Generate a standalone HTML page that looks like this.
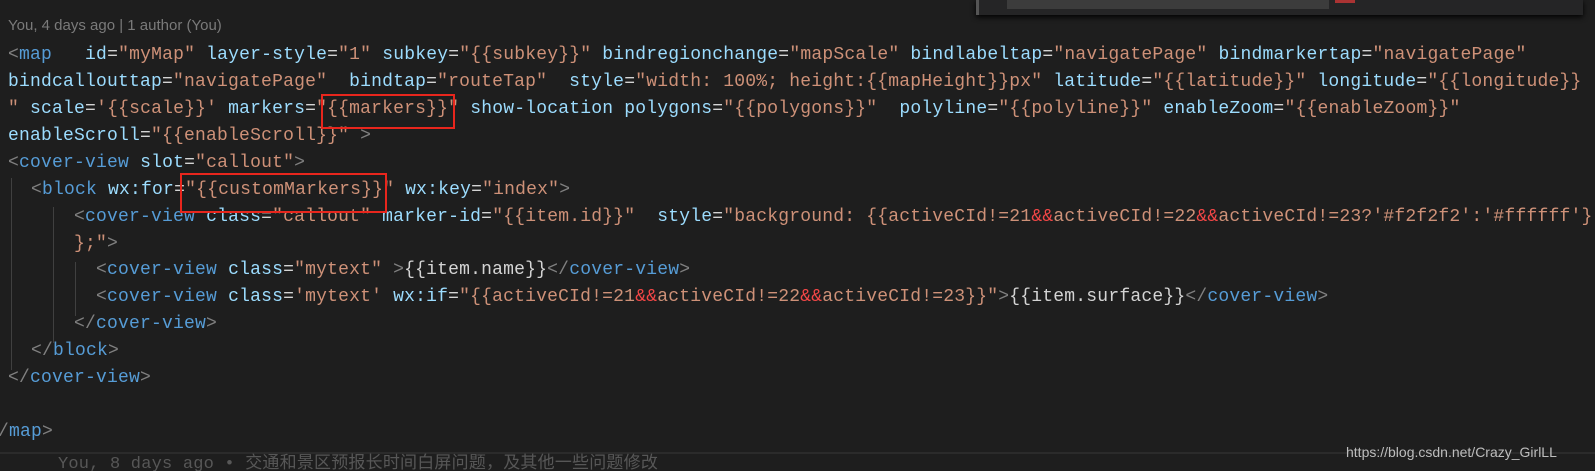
<!DOCTYPE html>
<html><head><meta charset="utf-8"><style>
html,body{margin:0;padding:0;background:#1e1e1e;width:1595px;height:471px;overflow:hidden;position:relative}
.l{position:absolute;white-space:pre;font-family:"Liberation Mono","Noto Sans CJK SC",monospace;font-size:18px;letter-spacing:0.2px;line-height:27px;height:27px;color:#d4d4d4}
.p{color:#808080}.t{color:#569cd6}.a{color:#9cdcfe}.s{color:#ce9178}.r{color:#f44747}.w{color:#d4d4d4}
.box{position:absolute;border:2px solid #e8261d;box-sizing:border-box}
.g{position:absolute;width:1px;background:#404040}
</style></head><body>
<div style="position:absolute;left:976px;top:0;width:604px;height:15px;background:#252526;border-left:3px solid #555;box-shadow:0 2px 6px #000"></div>
<div style="position:absolute;left:1007px;top:0;width:322px;height:9px;background:#3c3c3c"></div>
<div style="position:absolute;left:1335px;top:0;width:20px;height:3px;background:#a33"></div>

<div style="position:absolute;left:8px;top:17px;font-family:'Liberation Sans',sans-serif;font-size:15px;color:#7a7a7a;white-space:pre">You, 4 days ago | 1 author (You)</div>

<div class="l" style="left:8px;top:42px"><span class="p">&lt;</span><span class="t">map</span>   <span class="a">id</span>=<span class="s">"myMap"</span> <span class="a">layer-style</span>=<span class="s">"1"</span> <span class="a">subkey</span>=<span class="s">"{{subkey}}"</span> <span class="a">bindregionchange</span>=<span class="s">"mapScale"</span> <span class="a">bindlabeltap</span>=<span class="s">"navigatePage"</span> <span class="a">bindmarkertap</span>=<span class="s">"navigatePage"</span></div>
<div class="l" style="left:8px;top:69px"><span class="a">bindcallouttap</span>=<span class="s">"navigatePage"</span>  <span class="a">bindtap</span>=<span class="s">"routeTap"</span>  <span class="a">style</span>=<span class="s">"width: 100%; height:{{mapHeight}}px"</span> <span class="a">latitude</span>=<span class="s">"{{latitude}}"</span> <span class="a">longitude</span>=<span class="s">"{{longitude}}</span></div>
<div class="l" style="left:8px;top:96px"><span class="s">"</span> <span class="a">scale</span>=<span class="s">'{{scale}}'</span> <span class="a">markers</span>=<span class="s">"{{markers}}"</span> <span class="a">show-location</span> <span class="a">polygons</span>=<span class="s">"{{polygons}}"</span>  <span class="a">polyline</span>=<span class="s">"{{polyline}}"</span> <span class="a">enableZoom</span>=<span class="s">"{{enableZoom}}"</span></div>
<div class="l" style="left:8px;top:123px"><span class="a">enableScroll</span>=<span class="s">"{{enableScroll}}"</span> <span class="p">&gt;</span></div>
<div class="l" style="left:8px;top:150px"><span class="p">&lt;</span><span class="t">cover-view</span> <span class="a">slot</span>=<span class="s">"callout"</span><span class="p">&gt;</span></div>
<div class="l" style="left:31px;top:177px"><span class="p">&lt;</span><span class="t">block</span> <span class="a">wx:for</span>=<span class="s">"{{customMarkers}}"</span> <span class="a">wx:key</span>=<span class="s">"index"</span><span class="p">&gt;</span></div>
<div class="l" style="left:74px;top:204px"><span class="p">&lt;</span><span class="t">cover-view</span> <span class="a">class</span>=<span class="s">"callout"</span> <span class="a">marker-id</span>=<span class="s">"{{item.id}}"</span>  <span class="a">style</span>=<span class="s">"background: {{activeCId!=21</span><span class="r">&amp;&amp;</span><span class="s">activeCId!=22</span><span class="r">&amp;&amp;</span><span class="s">activeCId!=23?'#f2f2f2':'#ffffff'}</span></div>
<div class="l" style="left:74px;top:231px"><span class="s">};"</span><span class="p">&gt;</span></div>
<div class="l" style="left:96px;top:257px"><span class="p">&lt;</span><span class="t">cover-view</span> <span class="a">class</span>=<span class="s">"mytext"</span> <span class="p">&gt;</span><span class="w">{{item.name}}</span><span class="p">&lt;/</span><span class="t">cover-view</span><span class="p">&gt;</span></div>
<div class="l" style="left:96px;top:284px"><span class="p">&lt;</span><span class="t">cover-view</span> <span class="a">class</span>=<span class="s">'mytext'</span> <span class="a">wx:if</span>=<span class="s">"{{activeCId!=21</span><span class="r">&amp;&amp;</span><span class="s">activeCId!=22</span><span class="r">&amp;&amp;</span><span class="s">activeCId!=23}}"</span><span class="p">&gt;</span><span class="w">{{item.surface}}</span><span class="p">&lt;/</span><span class="t">cover-view</span><span class="p">&gt;</span></div>
<div class="l" style="left:74px;top:311px"><span class="p">&lt;/</span><span class="t">cover-view</span><span class="p">&gt;</span></div>
<div class="l" style="left:31px;top:338px"><span class="p">&lt;/</span><span class="t">block</span><span class="p">&gt;</span></div>
<div class="l" style="left:8px;top:365px"><span class="p">&lt;/</span><span class="t">cover-view</span><span class="p">&gt;</span></div>
<div class="l" style="left:-2px;top:419px"><span class="p">/</span><span class="t">map</span><span class="p">&gt;</span></div>

<div class="g" style="left:11px;top:178px;height:192px"></div>
<div class="g" style="left:53px;top:207px;height:136px"></div>
<div class="g" style="left:75px;top:262px;height:54px"></div>

<div class="box" style="left:321px;top:94px;width:134px;height:35px"></div>
<div class="box" style="left:180px;top:173px;width:207px;height:40px"></div>

<div style="position:absolute;left:0;top:452px;width:1595px;height:2px;background:#2b2b2b"></div>
<div class="l" style="left:58px;top:451px;color:#575757;font-size:17px">You, 8 days ago • 交通和景区预报长时间白屏问题，及其他一些问题修改</div>
<div style="position:absolute;left:1346px;top:444px;font-family:'Liberation Sans',sans-serif;font-size:14px;color:#bdbdbd;white-space:pre">https://blog.csdn.net/Crazy_GirlLL</div>
</body></html>
